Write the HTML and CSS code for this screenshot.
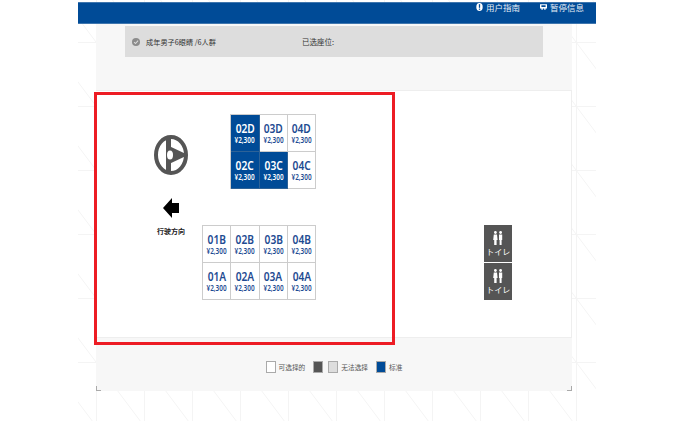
FILE: index.html
```html
<!DOCTYPE html>
<html lang="zh-CN">
<head>
  <meta charset="UTF-8">
  <title>选择座位</title>
  <link rel="stylesheet" href="styles.css">
</head>
<body>
  <div class="page">
    <header class="topbar">
      <span class="topbar-link">
        <svg class="topbar-icon" viewBox="0 0 8 10"><ellipse cx="4" cy="5" rx="4" ry="5" fill="#fff"/><rect x="3.2" y="1.5" width="1.6" height="4.5" fill="#004b97"/><rect x="3.2" y="7" width="1.6" height="1.5" fill="#004b97"/></svg>
        用户指南
      </span>
      <span class="topbar-link">
        <svg class="topbar-icon" viewBox="0 0 10 10"><path d="M0 1h10v6H8v2H6V7H4v2H2V7H0z" fill="#fff"/><rect x="2" y="2.5" width="6" height="2.5" fill="#004b97"/></svg>
        暂停信息
      </span>
    </header>

    <main class="panel">
      <div class="infobar">
        <div class="info-left">
          <svg class="check" viewBox="0 0 10 10"><circle cx="5" cy="5" r="5" fill="#8c8c8c"/><path d="M2.6 5.2l1.8 1.8 3.2-3.6" fill="none" stroke="#ddd" stroke-width="1.3"/></svg>
          <span>成年男子6眼睛 /6人群</span>
        </div>
        <div class="info-right">已选座位:</div>
      </div>

      <section class="seatmap">
        <div class="driver">
          <svg class="wheel" viewBox="0 0 34 40">
            <ellipse cx="17" cy="20" rx="15" ry="18" fill="none" stroke="#555" stroke-width="4"/>
            <path d="M12 2h5v36h-5z" fill="#555"/>
            <path d="M15 11L32 19V21L15 29Z" fill="#555"/>
            <ellipse cx="16" cy="20" rx="3" ry="4.5" fill="#fff"/>
          </svg>
          <svg class="arrow" viewBox="0 0 16 20"><path d="M0 10L9 0V5H16V15H9V20Z" fill="#000"/></svg>
          <div class="driver-label">行驶方向</div>
        </div>

        <div class="seats">
          <div class="seat-block seat-block-top">
            <div class="seat seat-picked"><b>02D</b><small>¥2,300</small></div>
            <div class="seat"><b>03D</b><small>¥2,300</small></div>
            <div class="seat"><b>04D</b><small>¥2,300</small></div>
            <div class="seat seat-picked"><b>02C</b><small>¥2,300</small></div>
            <div class="seat seat-picked"><b>03C</b><small>¥2,300</small></div>
            <div class="seat"><b>04C</b><small>¥2,300</small></div>
          </div>
          <div class="seat-block seat-block-bottom">
            <div class="seat"><b>01B</b><small>¥2,300</small></div>
            <div class="seat"><b>02B</b><small>¥2,300</small></div>
            <div class="seat"><b>03B</b><small>¥2,300</small></div>
            <div class="seat"><b>04B</b><small>¥2,300</small></div>
            <div class="seat"><b>01A</b><small>¥2,300</small></div>
            <div class="seat"><b>02A</b><small>¥2,300</small></div>
            <div class="seat"><b>03A</b><small>¥2,300</small></div>
            <div class="seat"><b>04A</b><small>¥2,300</small></div>
          </div>
        </div>

        <div class="toilets">
          <div class="toilet">
            <svg class="toilet-icon" viewBox="0 0 10 14"><g fill="#fff"><circle cx="2.4" cy="1.5" r="1.4"/><path d="M.8 3.6h3.2l.6 5.4H3.6v5H1.2V9H.2z"/><circle cx="7.6" cy="1.5" r="1.4"/><path d="M6 3.6h3.2v5.4h-.6v5H6.6V9H6z"/></g></svg>
            <span>トイレ</span>
          </div>
          <div class="toilet">
            <svg class="toilet-icon" viewBox="0 0 10 14"><g fill="#fff"><circle cx="2.4" cy="1.5" r="1.4"/><path d="M.8 3.6h3.2l.6 5.4H3.6v5H1.2V9H.2z"/><circle cx="7.6" cy="1.5" r="1.4"/><path d="M6 3.6h3.2v5.4h-.6v5H6.6V9H6z"/></g></svg>
            <span>トイレ</span>
          </div>
        </div>
      </section>

      <div class="legend">
        <i class="swatch swatch-free"></i><span class="legend-text">可选择的</span>
        <i class="swatch swatch-dark"></i><i class="swatch swatch-gray"></i><span class="legend-text">无法选择</span>
        <i class="swatch swatch-blue"></i><span class="legend-text">标准</span>
      </div>

      <div class="red-frame"></div>
      <i class="corner corner-left"></i>
      <i class="corner corner-right"></i>
    </main>
  </div>
</body>
</html>
```

FILE: styles.css
```css
html, body {
  margin: 0;
  height: 421px;
  overflow: hidden;
  background: #fff;
  font-family: "Noto Sans CJK SC", "Open Sans", sans-serif;
}

.page {
  width: 518px;
  height: 419px;
  margin-left: 78px;
  padding-top: 2px;
  background-image: url("data:image/svg+xml,%3Csvg xmlns='http://www.w3.org/2000/svg' width='48' height='64'%3E%3Cpath d='M.5 0V64M0 .5H48M0 0L48 64' fill='none' stroke='%23f4f4f4'/%3E%3C/svg%3E");
  background-position: 18px 42px;
}

.topbar {
  display: flex;
  justify-content: flex-end;
  gap: 20px;
  height: 22px;
  padding-right: 12px;
  box-sizing: border-box;
  background: #004b97;
  border-top: 1px solid #3f76ae;
  border-bottom: 1px solid #3f76ae;
  color: #e6edf5;
  font-size: 8.5px;
  line-height: 8px;
}

.topbar-link {
  display: flex;
  align-items: center;
  gap: 3px;
  height: 8px;
}

.topbar-icon {
  width: 7px;
  height: 8px;
}

.panel {
  position: relative;
  width: 476px;
  height: 367px;
  margin-left: 18px;
  background: #f7f7f7;
}

.infobar {
  display: flex;
  align-items: center;
  height: 31px;
  margin: 0 29px;
  padding-left: 7px;
  box-sizing: border-box;
  position: relative;
  top: 2px;
  background: #ddd;
  color: #333;
  font-size: 7.5px;
}

.info-left {
  display: flex;
  align-items: center;
  gap: 6px;
  width: 170px;
  font-size: 7.2px;
}

.check {
  width: 8px;
  height: 8px;
}

.seatmap {
  display: flex;
  height: 248px;
  margin-top: 35px;
  padding: 23px 0 0 55px;
  box-sizing: border-box;
  background: #fff;
  border-top: 1px solid #eee;
  border-bottom: 1px solid #eee;
  border-right: 1px solid #eee;
}

.driver {
  display: flex;
  flex-direction: column;
  align-items: center;
  width: 40px;
  padding-top: 21px;
}

.wheel {
  width: 34px;
  height: 40px;
}

.arrow {
  width: 16px;
  height: 20px;
  margin-top: 23px;
}

.driver-label {
  margin-top: 8px;
  color: #222;
  font-size: 7px;
  line-height: 10px;
  font-weight: 700;
}

.seats {
  display: flex;
  flex-direction: column;
  gap: 36px;
  margin-left: 11px;
}

.seat-block {
  display: grid;
  grid-template-rows: 37px 37px;
  border-top: 1px solid #ccc;
  border-left: 1px solid #ccc;
}

.seat-block-top {
  grid-template-columns: repeat(3, 28.33px);
  align-self: flex-end;
}

.seat-block-bottom {
  grid-template-columns: repeat(4, 28.33px);
}

.seat {
  display: flex;
  flex-direction: column;
  align-items: center;
  justify-content: center;
  box-sizing: border-box;
  border-right: 1px solid #ccc;
  border-bottom: 1px solid #ccc;
  background: #fff;
  color: #1e4b92;
  font-family: "Noto Sans", sans-serif;
}

.seat b {
  font-size: 12px;
  line-height: 13px;
  font-weight: 600;
  transform: scaleX(.85);
}

.seat small {
  font-size: 8px;
  line-height: 9px;
  font-weight: 600;
  transform: scaleX(.8);
}

.seat-picked {
  background: #004b97;
  color: #fff;
  border-color: #2d6297;
}

.toilets {
  display: flex;
  flex-direction: column;
  gap: 1px;
  align-self: flex-end;
  margin: 0 0 37px 168px;
}

.toilet {
  display: flex;
  flex-direction: column;
  align-items: center;
  justify-content: center;
  width: 28px;
  height: 37px;
  background: #555;
  color: #fff;
  font-size: 8px;
  line-height: 10px;
}

.toilet-icon {
  width: 10px;
  height: 14px;
  margin-bottom: 2px;
}

.legend {
  display: flex;
  align-items: center;
  justify-content: center;
  height: 22px;
  margin-top: 18px;
  color: #555;
  font-size: 6.7px;
}

.swatch {
  width: 8px;
  height: 10px;
  border: 1px solid #aaa;
}

.swatch-free { background: #fff; }
.swatch-dark { background: #555; margin-left: 8px; }
.swatch-gray { background: #ddd; margin-left: 5px; }
.swatch-blue { background: #004b97; margin-left: 8px; }

.legend-text {
  margin-left: 3px;
}

.red-frame {
  position: absolute;
  left: -2px;
  top: 68px;
  width: 295px;
  height: 247px;
  border: 3px solid #ed1c24;
}

.corner {
  position: absolute;
  bottom: 0;
  width: 4px;
  height: 4px;
  border-bottom: 1px solid #aaa;
}

.corner-left {
  left: 0;
  border-left: 1px solid #aaa;
}

.corner-right {
  right: 0;
  border-right: 1px solid #aaa;
}
```
